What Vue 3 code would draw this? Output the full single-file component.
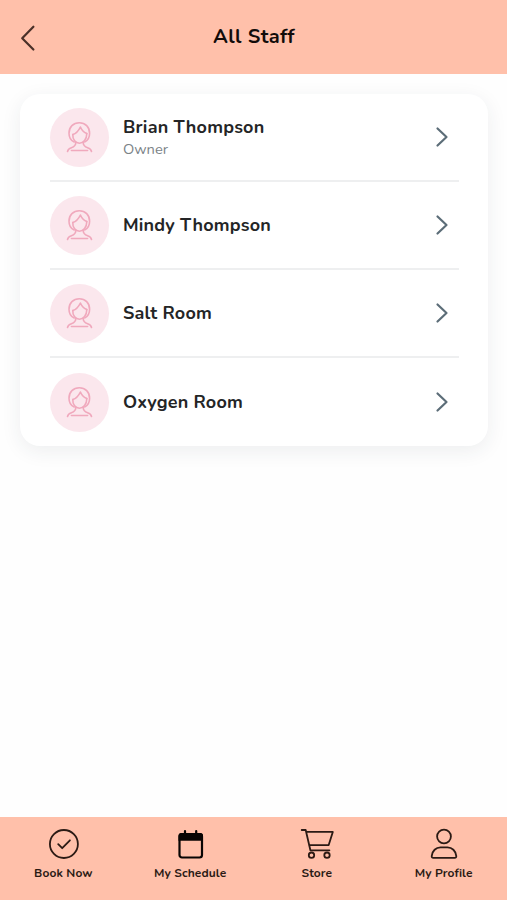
<template>
  <div class="screen">
    <header class="header">
      <button class="back" aria-label="Back">
        <svg width="16" height="28" viewBox="0 0 16 28">
          <path d="M13.400 2.700 2.200 14.200l11.200 11.300" />
        </svg>
      </button>
      <h1>All Staff</h1>
    </header>

    <main class="content">
      <ul class="card">
        <li v-for="person in staff" :key="person.name" class="row">
          <span class="avatar">
            <svg width="28" height="34" viewBox="0 0 28 34">
              <path d="M8.200 22C4.800 20.500 3 17.500 3 13.200 3 7 7.300 2.700 13.300 2.700S23.600 7 23.600 13.200c0 4.300-1.800 7.300-5 8.800" />
              <path d="M6.800 14.600c3.400-1 5.700-3.600 7.600-7.600 1 3 3 5 6.400 6.500" />
              <path d="M6.800 14.600c-.3 5.200 2.800 8.600 6.700 8.600s7.300-4.200 7.300-9.700" />
              <path d="M9.800 22.600c0 2.600-1.600 4.200-4.400 5.200-2.300.8-3.600 1.900-3.900 3.700M17.200 22.600c0 2.600 1.600 4.200 4.400 5.200 2.300.8 3.600 1.900 3.900 3.700" />
              <path d="M5.400 30.500h16.200" />
            </svg>
          </span>
          <div class="info">
            <span class="name">{{ person.name }}</span>
            <span v-if="person.role" class="role">{{ person.role }}</span>
          </div>
          <svg class="chevron" width="14" height="22" viewBox="0 0 14 22">
            <path d="m2.500 2.500 9 8.500-9 8.500" />
          </svg>
        </li>
      </ul>
    </main>

    <nav class="tabs">
      <a class="tab">
        <svg width="36" height="34" viewBox="0 0 36 34">
          <circle cx="18.900" cy="17" r="14" />
          <path d="m13.200 17.200 4 4 7.700-7.900" />
        </svg>
        <span>Book Now</span>
      </a>
      <a class="tab">
        <svg width="36" height="34" viewBox="0 0 36 34" class="calendar">
          <rect x="7.500" y="7" width="22.500" height="23.500" rx="2.500" />
          <path class="solid" d="M6.500 13.700V8.500Q6.500 6 9 6h19.500q2.500 0 2.500 2.500v5.200z" />
          <path d="M13 4v4M24.200 4v4" />
        </svg>
        <span>My Schedule</span>
      </a>
      <a class="tab">
        <svg width="36" height="34" viewBox="0 0 36 34">
          <path d="M2.700 3h4l4.700 20.300h19M7.300 4.900h26.500l-4.100 13.200H10" />
          <circle cx="12.500" cy="28.200" r="2.700" />
          <circle cx="28" cy="28.200" r="2.700" />
        </svg>
        <span>Store</span>
      </a>
      <a class="tab">
        <svg width="36" height="34" viewBox="0 0 36 34">
          <circle cx="18" cy="9.500" r="6.900" />
          <path d="M7.300 30.900c-1.100 0-1.700-.7-1.600-1.800.5-5.400 4.300-8.700 8.800-8.700h7c4.500 0 8.300 3.300 8.800 8.700.1 1.100-.5 1.800-1.600 1.800z" />
        </svg>
        <span>My Profile</span>
      </a>
    </nav>
  </div>
</template>

<script setup>
const staff = [
  { name: 'Brian Thompson', role: 'Owner' },
  { name: 'Mindy Thompson' },
  { name: 'Salt Room' },
  { name: 'Oxygen Room' }
]
</script>

<style>
body {
  margin: 0;
  background: #fefefe;
}
</style>

<style scoped>
.screen {
  display: flex;
  flex-direction: column;
  height: 100vh;
  overflow: hidden;
  background: #fefefe;
  color: #242526;
  font-family: Nunito, "Open Sans", "Noto Sans", sans-serif;
}

svg {
  display: block;
  fill: none;
  stroke: currentColor;
  stroke-linecap: round;
  stroke-linejoin: round;
}

.header {
  display: grid;
  grid-template-columns: 60px 1fr 60px;
  align-items: center;
  flex: none;
  height: 74px;
  background: #ffc0aa;
}

.back {
  padding: 1px 0 0 20px;
  border: 0;
  background: none;
  color: #4a3028;
}

.back svg {
  stroke-width: 2.2;
}

h1 {
  margin: 0;
  padding: 0 0 1px 1px;
  color: #120c0a;
  font-size: 20px;
  font-weight: 700;
  letter-spacing: 0.4px;
  line-height: 28px;
  text-align: center;
}

.content {
  flex: 1;
  padding: 20px 19px 0 20px;
}

.card {
  margin: 0;
  padding: 0 29px 0 30px;
  list-style: none;
  border-radius: 20px;
  background: #fff;
  box-shadow: 0 5px 20px rgba(40, 45, 65, 0.08);
}

.row {
  display: flex;
  align-items: center;
  box-sizing: border-box;
  height: 88px;
  border-bottom: 2px solid #eeeff0;
}

.row:last-child {
  border-bottom: 0;
}

.avatar {
  display: flex;
  align-items: center;
  justify-content: center;
  width: 59px;
  height: 59px;
  border-radius: 50%;
  background: #fbe7ed;
  color: #f0a9bd;
}

.avatar svg {
  stroke-width: 1.6;
}

.info {
  display: flex;
  flex: 1;
  flex-direction: column;
  margin-left: 14px;
}

.name {
  font-size: 18px;
  font-weight: 700;
  letter-spacing: 0.2px;
  line-height: 24px;
}

.role {
  color: #7b8387;
  font-size: 14.7px;
  line-height: 21px;
}

.chevron {
  margin-right: 10px;
  color: #5c6d78;
  stroke-width: 2.2;
}

.tabs {
  display: grid;
  grid-template-columns: repeat(4, 1fr);
  flex: none;
  height: 83px;
  background: #ffc0aa;
}

.tab {
  display: flex;
  flex-direction: column;
  align-items: center;
  padding-top: 10px;
  color: #2b1a14;
  font-size: 12px;
  font-weight: 700;
  letter-spacing: 0.1px;
  line-height: 16px;
}

.tab svg {
  stroke-width: 1.8;
}

.tab span {
  margin-top: 4px;
}

.tab .calendar {
  color: #080403;
  stroke-width: 2.2;
}

.solid {
  fill: currentColor;
  stroke: none;
}
</style>
